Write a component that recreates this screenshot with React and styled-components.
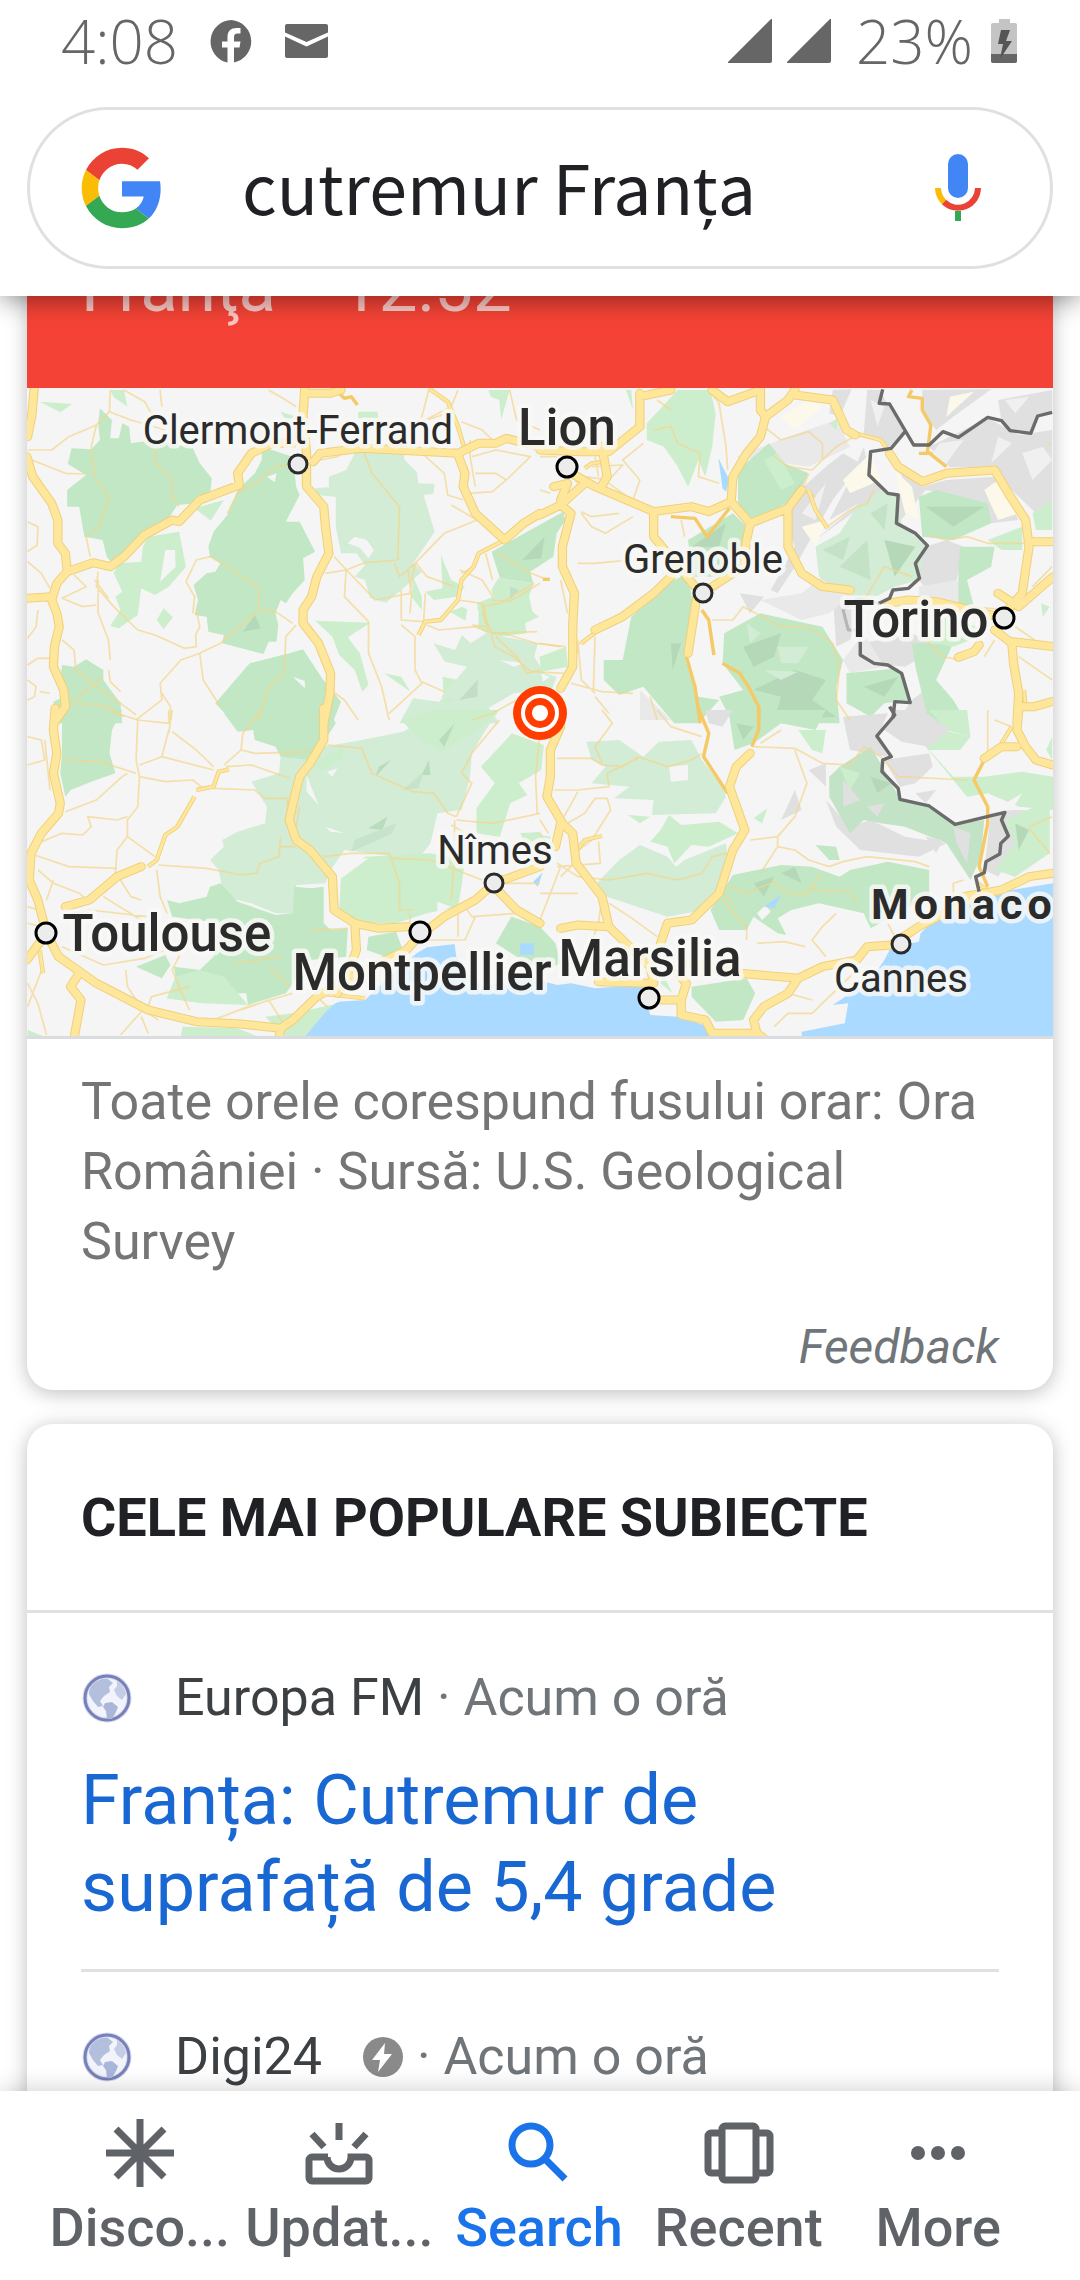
import React from "react";
import styled, { createGlobalStyle } from "styled-components";

const GlobalStyle = createGlobalStyle`
    * {
        box-sizing: border-box;
    }

    body {
        margin: 0;
        background: #ffffff;
        font-family: Roboto, "Noto Sans", sans-serif;
    }
`;

const PhoneStyled = styled.div`
    display: flex;
    flex-direction: column;
    height: 100vh;
    overflow: hidden;
`;

const HeaderStyled = styled.header`
    position: relative;
    z-index: 1;
    flex: none;
    padding: 0 27px 27px;
    background: #ffffff;
    box-shadow: 0 4px 24px rgba(0, 0, 0, 0.42);
`;

const StatusBarStyled = styled.div`
    display: flex;
    align-items: center;
    justify-content: space-between;
    height: 82px;
    margin-bottom: 25px;
    padding: 0 36px 0 34px;
    color: #666666;
    font-family: "Open Sans", "Noto Sans", sans-serif;
    font-size: 60px;
    font-weight: 300;
    line-height: 82px;

    svg {
        display: block;
    }
`;

const StatusGroupStyled = styled.div`
    display: flex;
    align-items: center;
    gap: ${(props) => props.$gap}px;
`;

const SearchFormStyled = styled.form`
    display: flex;
    align-items: center;
    height: 162px;
    padding: 0 52px 0 48px;
    border: 3px solid #e0e0e0;
    border-radius: 81px;

    svg {
        display: block;
    }
`;

const SearchInputStyled = styled.input`
    flex: 1;
    min-width: 0;
    margin: 0 32px 0 76px;
    padding: 0 0 4px;
    border: 0;
    outline: 0;
    background: none;
    color: #202124;
    font-family: "Noto Sans CJK JP", "Noto Sans", sans-serif;
    font-size: 68px;
    line-height: 100px;
`;

const IconButtonStyled = styled.button`
    padding: 0;
    border: 0;
    background: none;
`;

const ResultsStyled = styled.main`
    display: flex;
    flex: 1;
    flex-direction: column;
    gap: 34px;
    min-height: 0;
    margin-top: -48px;
    padding: 0 27px;
    overflow: hidden;
`;

const CardStyled = styled.section`
    flex: none;
    overflow: hidden;
    border-radius: ${(props) => (props.$open ? "0 0 26px 26px" : "26px")};
    background: #ffffff;
    box-shadow: 0 3px 20px rgba(0, 0, 0, 0.26);
`;

const BannerStyled = styled.div`
    display: flex;
    gap: 64px;
    height: 140px;
    padding: 0 54px;
    background: #f44336;
    color: rgba(255, 255, 255, 0.7);
    font-size: 69px;
    line-height: 80px;
`;

const MapStyled = styled.svg`
    display: block;
    width: 100%;
    height: auto;
`;

const SourceStyled = styled.p`
    margin: 0;
    padding: 28px 54px 42px;
    border-top: 3px solid #dadce0;
    color: #757575;
    font-size: 52px;
    line-height: 70px;
`;

const FeedbackStyled = styled.a`
    display: block;
    padding: 0 54px 15px;
    color: #70757a;
    font-size: 48px;
    font-style: italic;
    line-height: 56px;
    text-align: right;
    text-decoration: none;
`;

const CardTitleStyled = styled.h2`
    margin: 0;
    padding: 62px 54px 60px;
    border-bottom: 3px solid #dfe1e5;
    color: #202124;
    font-size: 54px;
    font-weight: 700;
    line-height: 64px;
`;

const StoryStyled = styled.article`
    margin: 0 54px;
    padding: 50px 0 38px;

    & + & {
        border-top: 3px solid #dfe1e5;
    }
`;

const StorySourceStyled = styled.div`
    display: flex;
    align-items: center;
    color: #70757a;
    font-size: 52px;
    line-height: 70px;
    white-space: pre;
`;

const PublisherStyled = styled.span`
    margin-left: 42px;
    color: #3c4043;
`;

const AmpStyled = styled.svg`
    margin-left: 40px;
`;

const StoryLinkStyled = styled.a`
    display: block;
    margin-top: 24px;
    color: #1967d2;
    font-size: 70px;
    line-height: 87px;
    text-decoration: none;
`;

const NavStyled = styled.nav`
    position: relative;
    z-index: 1;
    display: grid;
    grid-template-columns: repeat(5, 1fr);
    flex: none;
    padding: 26px 42px 20px 40px;
    background: #ffffff;
    box-shadow: 0 0 24px rgba(0, 0, 0, 0.2);
`;

const NavItemStyled = styled.button`
    display: flex;
    flex-direction: column;
    align-items: center;
    gap: 7px;
    padding: 0;
    border: 0;
    background: none;
    color: ${(props) => (props.$active ? "#1a73e8" : "#5f6368")};
    font-family: Roboto, sans-serif;
    font-size: 54px;
    font-weight: 500;
    line-height: 64px;
    white-space: nowrap;
`;

const CityStyled = styled.text`
    fill: #2b2b2b;
    stroke: #f8f8f6;
    stroke-opacity: 0.85;
    stroke-width: 9px;
    stroke-linejoin: round;
    paint-order: stroke;
    font-size: ${(props) => (props.$major ? 51 : 40)}px;
    font-weight: ${(props) => (props.$major ? 500 : 400)};
`;

const CountryStyled = styled(CityStyled)`
    font-size: 43px;
    font-weight: 700;
    letter-spacing: 5px;
`;

const GREEN = "#c1e7c4";
const LIGHT = "#cdeecd";
const PALE = "#d3ecd5";
const WATER = "#aadaff";
const LAND = "#f5f5f5";
const SHADE = "#e0e0e0";

// The map is split in tiles, each with its own coordinate grid
const tiles = [
    {
        x: 0, y: 380,
        areas: [
            [GREEN, "M290,85 L325,120 320,175 345,175 355,130 375,140 380,190 450,180 560,205 580,250 615,295 610,345 570,370 515,375 480,430 410,480 330,555 310,530 298,480 245,470 230,380 195,380 195,330 250,285 197,252 208,205 265,208 290,180 285,130Z"],
            [GREEN, "M760,200 L850,230 860,320 870,345 830,425 870,425 915,515 880,535 885,600 850,640 830,670 815,660 800,700 808,735 803,785 780,785 765,822 645,790 650,765 605,755 600,710 565,705 575,660 562,615 600,580 625,575 640,550 610,530 605,500 620,455 660,405 690,330 740,280 760,240Z"],
            [LAND, "M775,290 L803,280 798,307Z"],
            [LIGHT, "M320,30 L360,30 370,80 330,52Z M115,65 L210,72 175,97Z M565,385 L650,360 612,422Z M475,685 L502,712 475,748 455,720Z M815,95 L860,110 830,120Z M1040,95 H1095 L1100,115 1040,115Z M1418,30 H1480 L1455,120 1450,60 1425,50Z"],
            [LIGHT, "M415,500 L430,470 520,455 540,560 490,620 450,645 410,625 400,705 345,745 320,738 350,690 335,650 355,635 330,580 345,550 410,545Z"],
            [LAND, "M480,510 L508,510 510,560 465,605Z"],
            [PALE, "M955,290 L1005,270 1030,220 1060,195 1165,190 1175,240 1210,275 1215,310 1262,312 1258,342 1230,345 1262,455 1200,550 1225,575 1165,630 1120,668 1075,655 1060,600 1030,590 1060,555 1035,520 990,520 975,440 975,350 920,345 915,325 955,322Z"],
            [LAND, "M1010,490 L1030,470 1065,480 1085,510 1070,535 1045,503Z"],
            [LIGHT, "M915,722 L1075,728 1010,772 1045,820 1070,915 1052,935 1030,870 985,825 965,770Z M1115,880 L1165,890 1192,935Z M1280,525 L1310,600 1350,620 1325,650 1260,660 1235,635 1285,625Z M1200,590 L1225,650 1225,690 1195,650Z"],
            [PALE, "M1160,1030 L1200,955 1275,965 1300,935 1400,955 1450,1030Z"],
            [LIGHT, "M1285,890 L1330,900 1360,950 1290,975Z"],
            [GREEN, "M180,855 L215,860 250,838 300,870 300,900 350,970 355,1030 H155 L155,965 185,950 175,900Z"],
            [GREEN, "M725,850 L840,820 880,808 935,895 990,965 965,1030 H680 L625,970Z"],
            [LAND, "M850,890 L885,903 885,925Z"],
            ["#b5d9b8", "M705,755 L740,705 757,745Z"],
        ],
        minor: "M80,210 H150 L200,170 280,135 M80,235 L190,280 245,282 M280,135 L265,200 275,290 315,350 290,440 250,470 262,530 M320,30 L318,95 280,135 M360,30 L420,65 450,120 M465,30 L470,80 M318,95 L380,120 480,150 M455,180 L450,250 500,300 500,350 520,380 M80,425 L110,440 108,495 80,515 M80,545 L120,580 145,625 M215,585 L250,620 180,655 M285,575 L280,620 330,680 400,750 450,765 535,805 570,800 568,765 580,740 570,690 M285,600 L285,700 315,780 320,840 M275,600 L315,655 M540,605 L570,540 610,530 690,580 755,625 750,690 800,695 850,730 M540,605 L565,650 560,700 M750,690 L640,790 580,820 525,840 465,910 470,960 395,1020 M580,820 L590,900 640,980 M180,655 L240,680 280,675 M110,690 L105,740 80,775 M180,780 L215,810 220,870 280,920 350,970 395,1005 M80,855 L110,835 145,835 M315,870 L320,905 350,935 M80,900 L105,920 100,950 80,960 M115,935 L145,940 M200,970 L310,975 360,1010 M215,960 L300,890 M470,940 L495,980 V1020 M660,400 L690,340 740,310 800,260 860,250 M1050,200 L1080,280 1160,380 1155,540 1060,548 1005,570 945,580 M1005,570 L1000,650 1070,725 1070,820 1108,920 1130,1020 M970,530 L1015,580 1090,660 1190,640 1205,550 1160,590 1145,550 M1205,550 L1290,460 1385,420 M1385,420 L1310,375 M1165,630 L1165,720 1230,725 M1165,735 L1205,770 1205,870 1225,910 1130,1000 M1225,905 L1290,935 M860,735 L830,770 825,880 780,920 750,1020 M960,930 L1000,960 1040,1020 M1235,640 L1230,725 M1240,735 L1275,750 1380,740 1430,760 1560,755 M1205,545 L1240,590 1320,620 M1335,570 L1400,600 1430,650 M1410,520 L1430,600 M1330,660 L1400,670 1410,730 M1440,770 L1500,830 1530,880 1568,870 M1340,580 L1375,560 M1185,570 L1195,650 1190,700 M930,240 L980,230 1020,205 M780,30 L830,60 860,80 M1245,30 L1225,110 1160,200 M1330,30 L1310,80 1225,125 M1340,125 L1400,150 1440,190 M1365,180 V230 L1380,320 M1370,230 L1440,210 1540,230 1470,300 1430,335 1360,340 M1380,280 H1440 L1470,300 M1215,210 L1290,280 1300,345 1345,360 M1430,660 L1480,665 1568,610 M1310,95 L1240,120 M1480,30 L1500,120 1568,150 M1370,1020 L1430,1000 1500,960 M1400,700 L1430,760",
        mid: "M1245,25 L1300,65 1330,140 1350,210 M1465,480 L1390,520 1375,560 1340,600 1330,660 1280,720 1235,725 1215,765",
        orange: "M980,35 L1000,55 1020,50 1038,75",
        major: "M100,20 L92,110 80,170 M78,230 L95,290 150,370 168,420 168,490 190,520 195,575 165,610 150,660 165,700 172,740 158,800 155,860 185,930 190,980 160,1025 M78,655 L150,650 M195,575 L270,548 320,560 360,530 420,465 500,420 520,425 580,360 695,315 690,280 730,220 790,190 850,190 M885,20 L880,110 890,220 890,320 940,380 945,440 955,520 920,590 905,650 880,690 880,730 925,790 960,880 958,940 940,1030 M890,40 L960,40 990,30 M910,245 L930,220 1050,205 1330,220 1390,190 1440,190 1470,175 1568,200 M1330,225 L1350,280 1345,320 1380,400 1465,480 1520,430 1568,400",
    },
    {
        x: 540, y: 380,
        areas: [
            [LIGHT, "M310,130 L400,30 495,30 510,100 500,200 480,290 460,240 430,320 400,260 360,200 310,180Z M250,30 L265,30 270,90Z"],
            [SHADE, "M850,30 L905,28 870,110 840,100Z M950,30 L985,30 1060,155 1020,205 940,160Z M1110,30 L1310,28 1200,110 1150,150 1110,90Z M1330,60 L1487,30 V95 L1450,105 1425,160 1365,152 1340,122Z M1130,200 L1300,115 1390,165 1487,150 V400 L1440,400 1370,330 1320,260 1190,262Z M1050,280 L1110,320 1180,300 1320,290 1390,420 1310,430 1290,370 1120,330 1040,430Z M700,380 L830,260 880,220 930,250 850,360 740,560 690,640 670,630 740,500Z M800,480 L960,340 1030,345 920,390Z M940,200 L960,290 1010,340 960,350 840,420 900,300Z M1040,430 L1120,500 1180,480 1230,500 1210,600 1250,680 1150,660 1100,600Z M850,640 L940,650 900,780 860,800Z M940,790 L1080,760 1160,800 1060,860 960,850Z M1080,960 L1130,920 1160,1020 H1040Z M580,640 L650,650 610,700Z"],
            ["#e9e9e9", "M570,230 L720,170 860,120 900,200 780,260Z M640,660 L760,640 820,590 900,650 840,700 760,720Z M880,840 L940,760 1000,860 900,880Z M290,930 L380,1020 H290Z M1100,620 L1210,600 1240,690 1100,720Z"],
            ["#fdf9ea", "M700,110 L780,60 820,80 740,150Z M880,300 L960,220 990,300 900,340Z M1190,50 L1260,35 1180,110Z M1030,270 L1080,320 1100,420 1060,400Z M760,440 L830,420 800,500Z M1290,330 L1330,300 1390,400 1330,420Z"],
            ["#f0f0f0", "M1160,190 L1230,180 1180,250 1140,220Z M1330,170 L1370,190 1310,250Z M1350,60 L1420,50 1380,100Z M960,60 L1000,80 980,140Z M1400,220 L1460,200 1487,240 1430,300Z M760,400 L830,310 800,420Z"],
            [GREEN, "M575,270 L665,190 710,250 780,280 745,350 600,440 575,370Z"],
            [GREEN, "M430,480 L560,400 600,440 585,500 560,560 540,590 440,590Z"],
            [GREEN, "M370,610 L430,580 445,680 420,830 440,900 460,950 520,960 460,1030 H390 L300,920 230,945 185,900 185,840 240,840 265,710Z"],
            [GREEN, "M535,760 L640,700 820,740 880,840 860,920 870,1030 H560 L520,950 590,930 530,850Z"],
            [PALE, "M800,500 L870,460 920,380 990,330 1040,350 1050,430 1120,500 1100,600 1030,620 940,670 900,650 810,590Z"],
            [GREEN, "M1100,350 L1150,330 1300,370 1310,430 1200,480 1110,470Z M1220,500 L1320,500 1310,560 1240,600 1260,680 1215,680 1215,560Z M1080,790 L1200,790 1150,900 1200,960 1240,1030 H1130 L1090,860Z M890,880 L1040,865 1075,960 1000,970 960,1010 890,970Z"],
            [LIGHT, "M1430,400 L1487,360 V450 L1440,450Z M1300,480 L1400,440 1400,510 1340,510Z M1190,700 L1300,760 1200,800 1100,780Z M840,130 L865,115 860,150Z M1455,670 L1480,680 1460,710Z"],
            ["#b5d8b8", "M590,800 L700,760 680,830 620,860Z M620,930 L740,870 830,900 790,960 860,1010 680,1020 700,950Z M1120,380 L1290,380 1200,440Z M700,390 L770,290 740,340Z M380,790 L410,790 385,870Z M940,920 L1040,890 1000,950Z M1000,480 L1090,500 1030,590Z M440,500 L540,430 520,500Z"],
            [PALE, "M600,730 L640,760 610,790Z M690,800 L780,800 750,850 700,850Z M650,870 L750,875 700,900Z"],
            ["#c3e2c6", "M870,560 L950,480 960,600Z M820,510 L900,470 880,540Z M960,400 L1010,370 1000,450Z"],
            [LIGHT, "M650,240 L690,220 740,310 700,330Z"],
            [WATER, "M518,235 L550,300 540,335 530,325Z"],
        ],
        minor: "M300,190 L240,240 290,300 270,360 M330,150 L380,140 400,190 465,220 460,290 520,310 M490,30 L520,70 540,200 545,270 M120,395 L150,410 230,400 M120,400 L150,440 190,460 270,410 M110,550 H160 L210,545 270,540 320,545 M650,140 L700,180 780,155 820,190 820,240 790,270 720,260 680,230 M820,240 L860,200 920,165 M780,280 L760,330 800,350 M835,440 L900,390 950,370 970,330 M60,600 L80,700 M110,780 L120,900 160,940 M160,770 L155,930 M0,790 L60,800 M130,790 H110 V820 M90,910 L180,935 270,940 M500,720 L560,720 590,680 700,740 780,740 850,790 870,860 860,960 900,1020 M1130,465 L1180,480 1240,470 1300,490 1480,490 M1260,680 L1350,690 M1290,830 L1320,780 M1380,740 L1450,790 M1390,830 L1487,900 M1430,620 L1487,560 M130,290 L200,300 240,255 150,260 M160,230 L170,290 M60,240 L110,310 M200,310 L320,400 M410,420 L420,470 M540,480 L600,500 M930,680 L1000,560 1080,590 M160,950 L200,1000 M320,950 L340,1020 M1120,780 L1170,830 1220,840 M0,230 H50 M0,330 L30,340 M380,90 L340,60 M1480,190 V200",
        mid: "M915,160 L990,180 1015,220 M780,330 L800,390 835,445 M120,790 L170,750 M1405,930 L1410,980 M130,265 L150,250 185,245",
        orange: "M425,830 L450,920 465,1030 M530,850 L580,880 605,920 635,980 V1030 M1080,30 L1070,50 1110,55 1110,90 1135,135 1125,215 1180,260 M1100,220 H1140 M380,410 L450,415 485,470 550,385 M470,690 L490,720 505,825",
        major: "M0,405 L60,375 130,310 M60,375 L90,400 65,500 65,560 100,640 95,740 95,860 60,925 M290,40 L290,140 200,215 120,215 0,210 M290,50 L380,30 M180,200 L195,290 175,325 M40,320 L80,310 60,360 M100,285 L160,320 330,395 440,380 490,395 555,365 560,290 600,220 640,170 655,110 720,60 740,30 M740,45 L850,60 890,150 915,165 M500,30 L545,65 640,30 640,90 655,110 M555,365 L610,430 600,480 590,560 500,620 M610,430 L720,385 760,330 M720,385 L720,500 760,580 820,620 900,630 M330,395 V470 L370,520 450,620 M455,650 L430,820 M380,590 L330,640 240,710 160,750 M1015,220 L1040,260 1110,305 1180,280 1320,270 1360,340 1410,420 1420,500 1400,640 1350,700 M1420,485 H1490 M1330,640 L1390,680 1490,590 M1010,670 L1070,660 1150,665 1330,710 M1320,750 L1370,790 1375,850 1390,940 1385,1030 M1370,785 L1490,800 M1275,795 L1260,815 1215,832 M1395,980 L1435,980 1487,965",
        border: "M995,28 L985,70 1015,72 1085,195 1130,195 1170,155 1215,172 1300,112 1340,122 1365,152 1425,160 1445,108 1487,97 M1060,155 L1020,205 960,215 955,285 1010,340 1040,345 1035,430 1090,460 1125,497 1090,550 1102,595 1070,625 1025,630 1015,655 985,670 M930,785 L930,825 970,850 1010,855 1050,880 1075,968 1030,965 1025,1015",
        disputed: "M985,670 L925,655 880,690 895,750 930,750",
    },
    {
        x: 0, y: 710,
        areas: [
            [GREEN, "M180,0 H355 L325,60 318,130 335,190 265,215 205,240 190,260 175,190 180,130Z"],
            [PALE, "M815,140 L940,110 1050,90 1170,65 1250,20 1450,0 1410,60 1370,130 1365,200 1340,300 1270,310 1250,400 1220,440 1150,440 1000,420 960,480 945,520 860,525 850,610 800,610 730,580 650,560 635,480 610,450 650,410 645,390 690,365 770,340 775,290 730,215 810,190Z"],
            [GREEN, "M650,10 H960 L975,40 940,95 905,150 815,140 800,110 740,90 735,60 690,65Z"],
            [LIGHT, "M1165,30 L1250,0 1450,0 1390,60 1280,125 1200,70Z M905,160 L1000,110 990,150 930,185Z M1060,440 L1250,430 1350,450 1340,530 1330,590 1240,610 1150,640 1020,640 985,600 990,500Z M1510,370 L1570,365 V440Z"],
            [LAND, "M890,195 L925,285 890,245Z M1000,450 L1070,445 985,510Z M1270,575 L1310,590 1270,605Z M950,185 L980,175 965,200Z M945,350 L1000,370 960,365Z"],
            [GREEN, "M485,570 L520,580 600,560 610,530 640,520 690,575 800,615 850,610 855,530 905,535 940,530 940,640 960,660 1010,655 1005,740 900,750 830,850 720,885 715,850 585,850 590,880 485,865 510,800 505,770 580,780 620,740 640,640 500,620Z M395,770 L480,735 495,765 470,805Z M1070,680 L1150,665 1170,720 1120,740 1065,720Z"],
            [LIGHT, "M530,950 L690,955 750,980 H525Z M770,920 L850,910 985,880 890,980 H830Z M485,865 L510,800 580,780 650,800 720,885 590,880Z M80,960 L130,980 H80Z"],
            [GREEN, "M1485,620 L1570,650 V790 L1500,740 1440,700Z"],
            ["#b9dcbc", "M1225,195 L1245,150 1250,195Z M1070,355 L1125,320 1110,360Z M1275,90 L1320,40 1290,110Z M1090,200 L1135,150 1100,170Z"],
            ["#c8e3cb", "M1030,390 L1150,340 1140,370 1020,425Z M1170,240 L1230,185 1215,235Z"],
            [WATER, "M885,980 C920,940 960,880 985,875 L1060,870 1130,800 1210,730 1240,712 1320,702 1325,740 1400,830 1570,780 V980Z M1510,700 H1550 V735 H1510Z"],
        ],
        minor: "M310,0 L400,30 395,150 405,200 400,290 370,330 370,380 340,420 335,490 M400,30 L490,40 490,0 M490,60 L470,140 405,165 M180,150 L290,155 395,190 M470,140 L620,180 M500,65 L570,120 620,170 M405,200 L480,215 560,210 590,235 M500,0 L490,70 M650,165 L700,120 740,130 900,125 M655,170 L730,165 840,205 M620,235 L740,240 770,265 835,265 835,320 M80,165 L130,150 120,90 80,80 M130,90 L145,240 M190,305 L280,270 355,200 370,190 M110,400 L180,370 240,375 265,350 255,320 340,330 370,320 M370,380 L450,440 M100,435 L200,470 340,475 M460,465 L600,475 700,495 745,490 755,460 810,440 815,380 M455,480 L465,560 485,610 M350,510 L380,560 410,570 M155,510 L135,570 M110,480 L155,520 230,550 260,575 M180,620 L260,600 430,620 M180,710 L300,765 420,745 480,720 M300,560 L410,630 M520,690 L520,740 500,780 520,830 550,900 M365,780 L370,830 415,900 350,975 M415,900 L460,930 M80,820 L110,880 135,975 M125,770 L80,890 M430,890 L440,860 550,830 M410,920 L430,970 M620,930 L720,890 850,850 M700,900 L780,870 820,935 M950,105 L1050,115 1080,190 1200,245 1260,250 1300,310 1325,320 M1325,320 L1370,220 1340,190 1370,130 1450,30 M1325,330 L1430,340 1568,310 M1320,330 L1320,440 1310,570 M1310,345 L1370,380 1400,440 M940,440 L1020,430 1130,430 1160,520 1160,600 1200,600 M1130,445 L1250,450 1400,510 M1568,70 L1555,200 1560,310 M1440,520 H1568 M1190,610 V650 M1350,590 L1370,620 1500,610 1568,630 M1330,600 V680 M900,660 L1010,655 M780,770 L840,830 M680,760 L820,740 M1230,690 L1350,690 1380,620 M810,410 H860 M860,350 L870,290 M700,120 L705,70 760,0 M80,590 L110,600 M80,640 L120,650 M920,860 L950,890",
        mid: "M570,240 L620,230 635,185 665,178 M565,260 L515,350 480,375 455,450 430,470 M115,720 L125,790 M930,850 L1060,865",
        major: "M160,-5 L155,60 165,130 155,190 175,280 170,310 120,370 90,430 85,510 110,570 135,670 170,740 280,820 430,900 570,935 700,942 815,955 850,930 920,860 1060,780 1180,720 1215,680 1290,620 1380,570 1435,520 1568,470 M940,-5 L940,90 900,160 870,200 855,260 840,330 860,390 900,420 965,500 970,600 1030,640 1100,655 1185,650 M1030,640 L1035,720 1010,790 980,850 M190,590 L260,570 340,500 410,470 M135,670 L78,750 M230,790 L205,830 235,870 215,985 M815,955 L810,985 M1435,530 L1500,600 1568,640",
    },
    {
        x: 540, y: 710,
        areas: [
            [PALE, "M135,95 L230,90 300,140 345,95 440,90 470,150 530,230 540,260 510,310 325,315 330,270 215,265 260,230 150,220 190,170 150,150Z"],
            [LAND, "M375,170 L430,165 430,210 380,215Z"],
            [LIGHT, "M375,315 L410,345 520,335 575,370 490,410 440,405 390,460 370,410 320,395 350,360Z M255,315 L320,320 290,340Z M620,325 L660,295 645,340Z"],
            [PALE, "M290,405 L370,440 395,470 420,450 540,400 550,480 500,580 450,605 370,620 195,560 165,520 230,450Z"],
            [GREEN, "M560,495 L700,465 790,470 870,500 900,480 1010,455 1130,480 1130,560 960,655 940,610 810,580 730,600 690,625 715,675 690,670 620,620 600,660 520,660 495,600Z"],
            [LAND, "M630,610 L655,585 670,605 645,630Z"],
            [WATER, "M650,590 L700,555 680,595Z"],
            [GREEN, "M440,830 L600,805 625,850 590,930 510,935 440,860Z M800,405 L860,410 870,450 840,450Z M550,20 L640,0 830,0 800,60 700,40 620,100 565,120Z M0,650 L45,700 60,760 0,790Z"],
            [LIGHT, "M1050,70 L1170,60 1250,80 1220,120 1130,120 1200,200 1290,200 1400,185 1490,200 V300 L1390,290 1300,250 1240,260 1120,110Z M1130,0 H1240 L1250,80 1180,60Z M750,60 L830,60 820,130 790,120Z M360,800 L385,850 350,820Z M1470,120 L1487,80 V150Z"],
            [SHADE, "M1030,0 L1110,0 1190,60 1130,110 1050,95 1000,60Z M880,20 L1010,10 980,80 1010,140 900,120Z M1000,150 L1130,130 1140,170 1090,220 1045,230Z M780,180 L830,160 830,230Z M830,270 L900,350 960,330 1060,380 1180,400 1100,440 930,420 860,350Z M1310,300 L1410,300 1380,420 1330,500 1290,480Z M480,0 L560,0 530,50 490,40Z M700,330 L740,240 760,300Z"],
            ["#c3e3c6", "M840,200 L870,170 960,110 1000,180 1045,268 1130,288 1205,343 1290,330 1280,440 1250,510 1180,400 1060,350 990,340 940,330 900,370 840,260Z"],
            [LIGHT, "M1350,330 L1480,270 V430 L1380,500 1320,480 1380,400Z M870,170 L930,190 900,240Z"],
            [SHADE, "M1200,350 L1250,370 1240,460 1210,400Z M1120,380 L1170,390 1150,430Z M950,290 L1000,280 980,320Z M880,210 L930,270 880,290Z M1090,250 L1150,240 1120,280Z"],
            ["#b5d9b8", "M700,490 L740,470 760,520Z M570,40 L620,50 590,90Z M960,200 L1020,220 980,250Z M1380,340 L1420,360 1390,420Z M620,520 L680,500 650,560Z"],
            [LAND, "M1305,250 L1335,290 1400,250 1370,300 1310,310Z M1140,225 L1210,225 1250,290 1200,260Z"],
            [WATER, "M-5,810 L50,825 90,820 160,835 220,830 300,830 320,915 400,920 475,945 495,980 H-5Z M760,965 L885,940 895,880 850,885 960,810 1000,750 1020,710 1100,695 1105,670 1130,645 1200,600 1280,570 1370,540 1490,520 V980 H760Z"],
        ],
        minor: "M50,145 H150 L180,165 240,170 285,140 370,170 440,150 470,130 M40,240 L110,240 200,230 195,190 285,145 M70,320 L110,245 M80,340 L130,310 160,265 195,265 205,300 150,390 100,430 M170,395 L175,460 50,470 M50,460 L110,500 200,510 310,490 400,510 470,490 500,440 540,430 M0,630 L60,470 M0,550 H110 M180,560 L170,640 130,750 M200,580 L260,620 340,680 M180,0 L210,40 160,110 180,160 M340,0 L380,50 470,80 M620,110 L740,115 820,160 900,165 940,110 990,140 1040,200 1240,210 M740,120 L775,220 740,320 690,380 610,390 M690,380 V410 L740,420 780,450 840,470 880,455 950,440 1090,455 1130,470 M690,410 L640,490 M550,530 L600,550 680,515 720,550 770,555 820,490 M530,570 L600,650 600,690 M520,540 L560,580 M830,740 L790,690 820,650 860,610 M770,540 L900,545 920,580 M630,700 L710,695 770,710 M1010,640 L1030,680 M930,770 L870,830 790,910 720,910 680,950 M720,850 L790,870 M1300,140 V0 M1370,50 L1320,30 M1420,350 L1487,320 M1420,355 L1480,430 M0,370 L30,420 M60,500 L100,460 M640,100 L700,60 M0,330 L25,370 M1200,560 V520 L1230,510",
        mid: "M100,430 L130,390 180,378 M1270,520 L1300,540 M1340,100 L1370,50",
        orange: "M460,-5 L490,70 475,140 545,250 M635,-5 L635,60 615,110 M1290,150 L1260,210 1300,290 1300,340 1275,470 1300,530",
        major: "M60,50 L30,120 30,200 20,260 65,340 95,370 105,460 180,560 200,650 250,700 320,770 330,820 M60,340 L45,410 M60,655 L110,645 200,650 M350,700 L370,640 440,630 520,550 560,420 595,360 550,230 570,170 610,130 M170,815 L320,820 M430,760 L580,790 750,805 820,770 920,750 950,710 1020,705 1100,650 1240,575 M750,805 L720,850 650,890 620,930 630,970 500,970 480,930 410,915 410,870 425,820 400,790 M350,870 H410 M630,970 L650,985 M1390,-5 L1385,60 1410,110 1440,150 1487,165 M1385,110 L1340,110 1290,145 M1230,560 L1340,540 1420,500 1490,490",
        border: "M1015,-10 L1030,15 978,78 1020,140 995,150 993,185 1040,235 1045,268 1130,288 1205,343 1350,307 1340,330 1360,378 1338,400 1335,432 1295,455 1290,488 1265,500 1275,545",
    },
    {
        x: 400, y: 500,
        areas: [
            [LIGHT, "M285,235 L387,250 375,290 385,335 403,350 363,370 368,400 290,410 252,400 145,335 180,320 225,345 225,310 270,290 265,270Z"],
            [GREEN, "M266,155 L474,35 480,60 455,100 445,170 378,215 387,250 290,235Z"],
            [PALE, "M97,430 L160,450 180,405 205,430 250,400 300,410 400,430 390,470 420,520 455,530 440,570 330,580 250,628 120,590 195,500 130,485Z"],
            [LIGHT, "M405,470 L482,440 488,500 410,515Z M235,800 L325,700 418,735 410,810 345,850 370,885 320,910 290,1010 222,1000 222,925 275,850Z M352,998 L440,1010 420,1030 355,1020Z"],
            [LAND, "M195,330 H228 V380 L188,375Z M290,480 L360,490 330,500Z M410,520 L435,530 415,545Z"],
            ["#b5d9b8", "M355,180 L420,110 410,175Z"],
            ["#c3ddc6", "M172,600 L225,540 225,590Z M345,270 L320,300 320,260Z"],
            [WATER, "M387,1145 L414,1118 400,1160Z"],
        ],
        minor: "M265,400 L300,400 395,430 480,440 M265,405 L275,440 330,470 380,515 480,520 M390,250 L290,310 240,320 M285,160 L370,215 430,240 M210,375 L250,380 M245,320 L255,390",
        orange: "M415,238 H435",
    },
];

const cities = [
    { name: "Clermont-Ferrand", x: 298, y: 444, dot: [298, 464] },
    { name: "Lion", x: 567, y: 445, dot: [567, 467], major: true },
    { name: "Grenoble", x: 703, y: 573, dot: [703, 593] },
    { name: "Torino", x: 916, y: 637, dot: [1004, 618], major: true },
    { name: "Nîmes", x: 495, y: 864, dot: [494, 883] },
    { name: "Toulouse", x: 167, y: 951, dot: [46, 933], major: true },
    { name: "Montpellier", x: 422, y: 990, dot: [420, 932], major: true },
    { name: "Marsilia", x: 650, y: 976, dot: [649, 998], major: true },
    { name: "Cannes", x: 901, y: 992, dot: [901, 944] },
];

const TileLayer = (props) => {
    const { tile, children } = props;

    return (
        <g transform={`translate(${tile.x} ${tile.y}) scale(0.3444 0.3333)`}>{children}</g>
    )
}

const EarthquakeMap = () => {
    return (
        <MapStyled viewBox="27 388 1026 648" role="img" aria-label="Franța">
            <rect x="27" y="388" width="1026" height="648" fill={LAND} />
            {tiles.map((tile, index) => (
                <TileLayer key={index} tile={tile}>
                    {tile.areas.map(([color, path], i) => <path key={i} d={path} fill={color} />)}
                </TileLayer>
            ))}
            {tiles.map((tile, index) => (
                <TileLayer key={index} tile={tile}>
                    <g fill="none" strokeLinejoin="round">
                        <path d={tile.minor} stroke="#f3d58a" strokeOpacity="0.7" strokeWidth="5" />
                        <path d={tile.mid} stroke="#f1d07c" strokeWidth="13" />
                        <path d={tile.mid} stroke="#fee79b" strokeWidth="8" />
                        <path d={tile.orange} stroke="#f5ca66" strokeWidth="10" />
                    </g>
                </TileLayer>
            ))}
            {tiles.map((tile, index) => (
                <TileLayer key={index} tile={tile}>
                    <path d={tile.major} fill="none" stroke="#f0d07c" strokeWidth="27" strokeLinejoin="round" strokeLinecap="round" />
                </TileLayer>
            ))}
            {tiles.map((tile, index) => (
                <TileLayer key={index} tile={tile}>
                    <g fill="none" strokeLinejoin="round">
                        <path d={tile.major} stroke="#fee79b" strokeWidth="21" strokeLinecap="round" />
                        <path d={tile.disputed} stroke="#b5b5b5" strokeWidth="9" />
                        <path d={tile.border} stroke="#6b6b6b" strokeWidth="10" />
                    </g>
                </TileLayer>
            ))}
            {cities.map((city) => (
                <g key={city.name}>
                    <CityStyled x={city.x} y={city.y} textAnchor="middle" $major={city.major}>{city.name}</CityStyled>
                    <circle
                        cx={city.dot[0]}
                        cy={city.dot[1]}
                        r={city.major ? 10 : 9}
                        fill="#ececec"
                        stroke={city.major ? "#000000" : "#2b2b2b"}
                        strokeWidth="3"
                    />
                </g>
            ))}
            <CountryStyled x="871" y="919">Monaco</CountryStyled>
            <circle cx="540" cy="713" r="27" fill="#ff3d00" />
            <circle cx="540" cy="713" r="17" fill="none" stroke="#ffffff" strokeWidth="4" />
            <circle cx="540" cy="713" r="8" fill="#ffffff" />
        </MapStyled>
    )
}

const StatusBar = () => {
    return (
        <StatusBarStyled>
            <StatusGroupStyled $gap={32}>
                <span>4:08</span>
                <svg width="43" height="43" viewBox="0 0 43 43" fill="currentColor">
                    <path d="M21.500 0a21.500 21.500 0 0 0-4 42.500V27.500h-5.500v-6h5.500v-4.500c0-6 3.500-9 9-9h4v5.500h-3c-2.500 0-3.500 1.200-3.500 3.500v4.500h6.500l-1 6h-5.500v15A21.500 21.500 0 0 0 21.500 0z" />
                </svg>
                <svg width="43" height="34" viewBox="0 0 43 34" fill="currentColor">
                    <path d="M2 0h39a2 2 0 0 1 2 2v6.500L21.500 18 0 8.500V2a2 2 0 0 1 2-2z" />
                    <path d="M0 12.500L21.500 22.500 43 12.500V32a2 2 0 0 1-2 2H2a2 2 0 0 1-2-2z" />
                </svg>
            </StatusGroupStyled>
            <StatusGroupStyled $gap={25}>
                <StatusGroupStyled $gap={15}>
                    <svg width="44" height="44" viewBox="0 0 44 44" fill="currentColor">
                        <path d="M0 44v-1L43 0h1v42a2 2 0 0 1-2 2z" />
                    </svg>
                    <svg width="44" height="44" viewBox="0 0 44 44" fill="currentColor">
                        <path d="M0 44v-1L43 0h1v42a2 2 0 0 1-2 2z" />
                    </svg>
                </StatusGroupStyled>
                <StatusGroupStyled $gap={18}>
                    <span>23%</span>
                    <svg width="26" height="44" viewBox="0 0 26 44">
                        <path d="M8 0h11v4h5a2 2 0 0 1 2 2v36a2 2 0 0 1-2 2H2a2 2 0 0 1-2-2V6a2 2 0 0 1 2-2h6z" fill="#c4c4c4" />
                        <path d="M0 35h26v7a2 2 0 0 1-2 2H2a2 2 0 0 1-2-2z" fill="#666666" />
                        <path d="M10 11h9l-4 11h6L9 40l3-15H7z" fill="#555555" />
                    </svg>
                </StatusGroupStyled>
            </StatusGroupStyled>
        </StatusBarStyled>
    )
}

const SearchBox = () => {
    return (
        <SearchFormStyled>
            <svg width="88" height="88" viewBox="0 0 48 48" aria-hidden="true">
                <g transform="translate(2 2) scale(0.917)">
                    <path fill="#ea4335" d="M24 9.500c3.540 0 6.710 1.220 9.210 3.600l6.850-6.850C35.900 2.380 30.470 0 24 0 14.620 0 6.510 5.380 2.560 13.220l7.980 6.190C12.430 13.720 17.740 9.500 24 9.500z" />
                    <path fill="#4285f4" d="M46.980 24.550c0-1.570-.15-3.090-.38-4.550H24v9.020h12.940c-.58 2.960-2.260 5.480-4.780 7.180l7.730 6c4.510-4.180 7.090-10.360 7.090-17.650z" />
                    <path fill="#fbbc05" d="M10.530 28.590c-.48-1.450-.76-2.990-.76-4.590s.27-3.140.76-4.590l-7.980-6.190C.92 16.460 0 20.120 0 24c0 3.880.92 7.540 2.560 10.780l7.970-6.190z" />
                    <path fill="#34a853" d="M24 48c6.480 0 11.930-2.130 15.890-5.810l-7.730-6c-2.150 1.450-4.920 2.300-8.160 2.300-6.260 0-11.570-4.220-13.470-9.910l-7.980 6.190C6.510 42.620 14.620 48 24 48z" />
                </g>
            </svg>
            <SearchInputStyled type="text" aria-label="Search" defaultValue="cutremur Franța" />
            <IconButtonStyled type="button" aria-label="Voice search">
                <svg width="80" height="80" viewBox="0 0 80 80">
                    <rect x="30" y="6" width="20" height="44" rx="10" fill="#4285f4" />
                    <path d="M20 40a20 20 0 0 0 6 14" fill="none" stroke="#fbbc05" strokeWidth="6" />
                    <path d="M26 54a20 20 0 0 0 34-14" fill="none" stroke="#ea4335" strokeWidth="6" />
                    <path d="M37 63h6v10h-6z" fill="#34a853" />
                </svg>
            </IconButtonStyled>
        </SearchFormStyled>
    )
}

const GlobeIcon = () => {
    return (
        <svg width="52" height="52" viewBox="0 0 52 52" aria-hidden="true">
            <circle cx="26" cy="26" r="22" fill="#f1f4fb" stroke="#d5d9ee" strokeWidth="5" />
            <circle cx="26" cy="26" r="22" fill="none" stroke="#7780b8" strokeWidth="3" />
            <path d="M12 12c4-4 10-6 15-5l5 4-4 4 1 5-6 4-4 5 3 5-5 1-5-6-4-7c0-4 1-7 4-10z" fill="#b4bfde" />
            <path d="M24 31l7-1 6 5-2 5-4 7h-5l-1-8-3-4z" fill="#aab6da" />
            <path d="M36 9c5 3 8 8 9 13l-4 6-5-4-3-6 3-4z" fill="#c5cde6" />
        </svg>
    )
}

const stories = [
    { publisher: "Europa FM", time: "Acum o oră", title: "Franța: Cutremur de suprafață de 5,4 grade" },
    { publisher: "Digi24", time: "Acum o oră", amp: true },
];

const Story = (props) => {
    const { story } = props;

    return (
        <StoryStyled>
            <StorySourceStyled>
                <GlobeIcon />
                <PublisherStyled>{story.publisher}</PublisherStyled>
                {story.amp && (
                    <AmpStyled width="42" height="42" viewBox="0 0 42 42">
                        <circle cx="21" cy="21" r="20" fill="#8a8a8a" />
                        <path d="M23 7L10 24h8l-2 12 14-18h-8z" fill="#ffffff" />
                    </AmpStyled>
                )}
                <span>{" · " + story.time}</span>
            </StorySourceStyled>
            {story.title && <StoryLinkStyled href="#">{story.title}</StoryLinkStyled>}
        </StoryStyled>
    )
}

const navItems = [
    {
        label: "Disco...",
        icon: <path d="M36 2v68M2 36h68M12 12l48 48M60 12L12 60" strokeWidth="7" />,
    },
    {
        label: "Updat...",
        icon: (
            <>
                <path d="M36 6v17M9 17l12 13M63 17L51 30" strokeWidth="7" />
                <path d="M25 40H9a3 3 0 0 0-3 3v18a3 3 0 0 0 3 3h54a3 3 0 0 0 3-3V43a3 3 0 0 0-3-3H48a12 12 0 0 1-24 0" strokeWidth="7" />
            </>
        ),
    },
    {
        label: "Search",
        active: true,
        icon: (
            <>
                <circle cx="28" cy="28" r="19" strokeWidth="7" />
                <path d="M41 41l21 21" strokeWidth="7" />
            </>
        ),
    },
    {
        label: "Recent",
        icon: (
            <>
                <rect x="19" y="9" width="34" height="54" rx="3" strokeWidth="7" />
                <path d="M19 16H8a3 3 0 0 0-3 3v34a3 3 0 0 0 3 3h11M53 16h11a3 3 0 0 1 3 3v34a3 3 0 0 1-3 3H53" strokeWidth="7" />
            </>
        ),
    },
    {
        label: "More",
        icon: <path d="M16 36h0M36 36h0M56 36h0" strokeWidth="14" strokeLinecap="round" />,
    },
];

function App() {
    return (
        <PhoneStyled>
            <GlobalStyle />
            <HeaderStyled>
                <StatusBar />
                <SearchBox />
            </HeaderStyled>
            <ResultsStyled>
                <CardStyled $open>
                    <BannerStyled>
                        <span>Franţa</span>
                        <span>12:52</span>
                    </BannerStyled>
                    <EarthquakeMap />
                    <SourceStyled>Toate orele corespund fusului orar: Ora României · Sursă: U.S. Geological Survey</SourceStyled>
                    <FeedbackStyled href="#">Feedback</FeedbackStyled>
                </CardStyled>
                <CardStyled>
                    <CardTitleStyled>CELE MAI POPULARE SUBIECTE</CardTitleStyled>
                    {stories.map((story, index) => {
                        return <Story key={index} story={story} />
                    })}
                </CardStyled>
            </ResultsStyled>
            <NavStyled>
                {navItems.map((item) => (
                    <NavItemStyled key={item.label} type="button" $active={item.active}>
                        <svg width="72" height="72" viewBox="0 0 72 72" fill="none" stroke="currentColor">
                            {item.icon}
                        </svg>
                        <span>{item.label}</span>
                    </NavItemStyled>
                ))}
            </NavStyled>
        </PhoneStyled>
    )
}

export default App;
